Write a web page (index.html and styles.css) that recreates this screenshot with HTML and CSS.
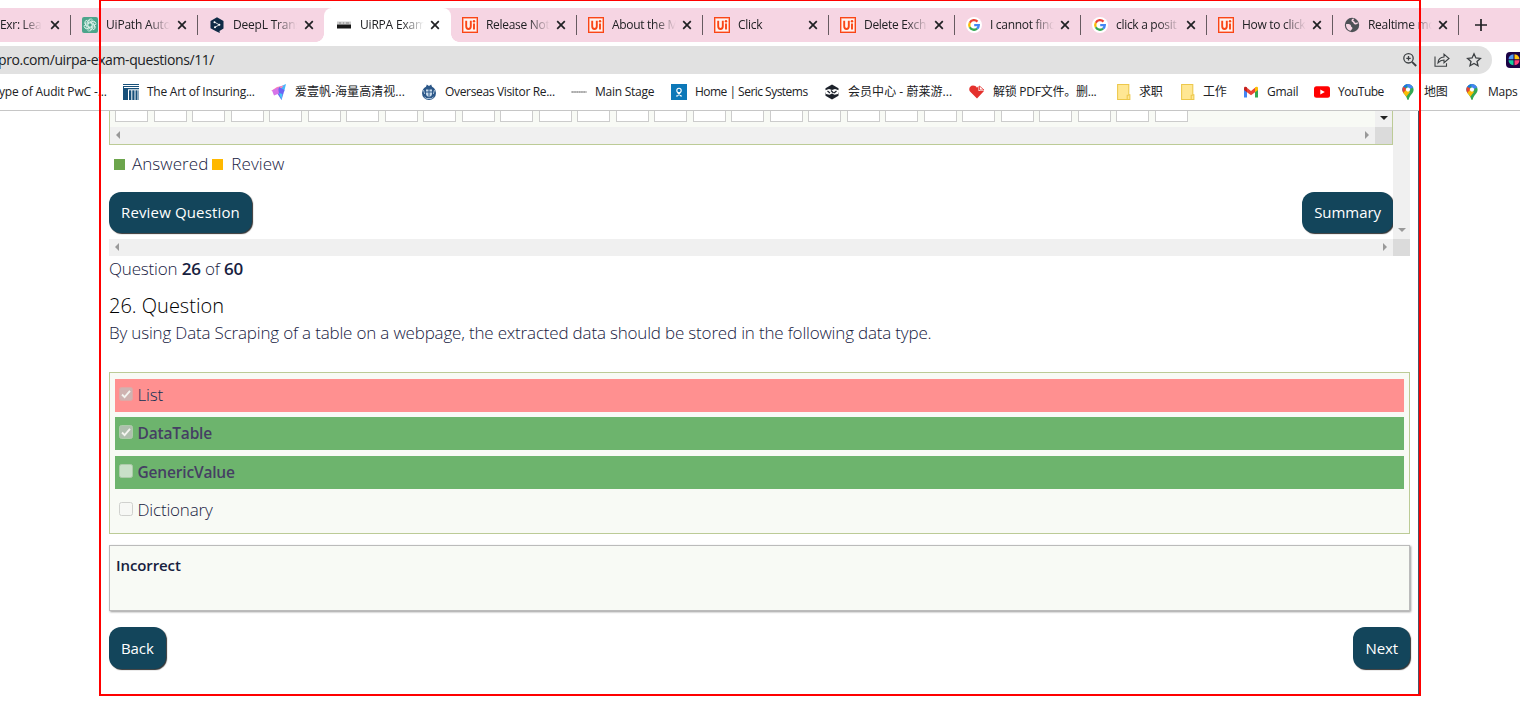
FILE: index.html
```html
<!DOCTYPE html>
<html lang="en">
<head>
<meta charset="utf-8">
<title>UiRPA Exam Questions</title>
<link rel="stylesheet" href="styles.css">
</head>
<body>
<svg class="defs" width="0" height="0">
  <symbol id="x" viewBox="0 0 10 10"><path d="M1.2 1.2 8.8 8.8M8.8 1.2 1.2 8.8" stroke="#202124" stroke-width="1.7" fill="none"/></symbol>
  <symbol id="ui" viewBox="0 0 16 16"><path fill="#fa4616" d="M0 0h16v16H0z"/><path d="M1.500 1.500h13v13h-13z" fill="#fff3ef" stroke="#ffb5a3" stroke-width=".6"/><path d="M4.200 3.800v5.500c0 3.600 4.600 3.600 4.600 0V3.800M12 6.500v6" fill="none" stroke="#fa4616" stroke-width="1.900"/><circle cx="12" cy="4.300" r="1.200" fill="#fa4616"/></symbol>
  <symbol id="g" viewBox="0 0 16 16"><circle cx="8" cy="8" r="8" fill="#fff"/><g fill="none" stroke-width="2.3"><path d="M11.5 4.6A4.8 4.8 0 0 0 3.8 5.7" stroke="#ea4335"/><path d="M3.8 5.7a4.9 4.9 0 0 0 0 4.6" stroke="#fbbc05"/><path d="M3.8 10.3a4.8 4.8 0 0 0 7.3 1.3" stroke="#34a853"/><path d="M11.1 11.6A4.8 4.8 0 0 0 12.8 8.1H8.2" stroke="#4285f4"/></g></symbol>
  <symbol id="pin" viewBox="0 0 12 16"><clipPath id="pc"><path d="M6 0a5.6 5.6 0 0 0-5.6 5.7C.4 9.6 4.2 10.800 5.200 15.200c.2 1 1.400 1 1.600 0C7.800 10.800 11.600 9.600 11.600 5.700A5.600 5.600 0 0 0 6 0z"/></clipPath><g clip-path="url(#pc)"><path fill="#34a853" d="M0 0h12v16H0z"/><path fill="#1a73e8" d="M0 0h7L0 7z"/><path fill="#4285f4" d="M5 0h7v3L6 6z"/><path fill="#ea4335" d="M0 2 5 5 1 10H0z"/><path fill="#fbbc04" d="M1 9 5 5 8 8 4 13z"/></g><circle cx="6" cy="5.600" r="2.100" fill="#fff"/></symbol>
  <symbol id="folder" viewBox="0 0 13 15"><path d="M.5.5h10.500v9.500h1v4.500H.5z" fill="#ffe793" stroke="#edc84b"/><path d="M9.500 14v-3.500h1.500" fill="none" stroke="#edc84b"/></symbol>
</svg>

<header class="browser">
  <nav class="tabs">
    <div class="tab tab-first"><span class="title">Exr: Lear</span><svg class="close"><use href="#x"/></svg></div>
    <div class="tab tab-wide">
      <svg class="fav" viewBox="0 0 16 16"><rect width="16" height="16" rx="2" fill="#4ba58b"/><g fill="none" stroke="#e4f7f0" stroke-width=".8"><path id="k" d="M6 9.200V4.600a2.600 2.600 0 0 1 4.800-1.400M6 5.800l3.500-2 3 1.700"/><use href="#k" transform="rotate(60 8 8)"/><use href="#k" transform="rotate(120 8 8)"/><use href="#k" transform="rotate(180 8 8)"/><use href="#k" transform="rotate(240 8 8)"/><use href="#k" transform="rotate(300 8 8)"/></g></svg>
      <span class="title">UiPath Auto</span><svg class="close"><use href="#x"/></svg></div>
    <div class="tab tab-plain">
      <svg class="fav" viewBox="0 0 16 16"><path d="M8 .2 14.500 4v7.500L10.500 14l.3 2L7 14.200 1.500 11.300V4z" fill="#0f2b46"/><path d="m5.300 5 5 2.800-4.500 2.500" fill="none" stroke="#fff" stroke-width=".8"/><g fill="#fff"><circle cx="5.500" cy="5.200" r="1"/><circle cx="10.400" cy="7.800" r="1"/><circle cx="6" cy="10.300" r="1"/></g></svg>
      <span class="title">DeepL Trans</span><svg class="close"><use href="#x"/></svg></div>
    <div class="tab tab-active">
      <svg class="fav" viewBox="0 0 16 16"><path d="M1 4.500h14v3H1z" fill="#ccc"/><path d="M1 7.500h14v4H1z" fill="#171717"/><path d="M3 6h2m2 0h1m2 0h3" stroke="#888"/></svg>
      <span class="title">UiRPA Exam</span><svg class="close"><use href="#x"/></svg></div>
    <div class="tab"><svg class="fav"><use href="#ui"/></svg><span class="title">Release Not</span><svg class="close"><use href="#x"/></svg></div>
    <div class="tab"><svg class="fav"><use href="#ui"/></svg><span class="title">About the M</span><svg class="close"><use href="#x"/></svg></div>
    <div class="tab"><svg class="fav"><use href="#ui"/></svg><span class="title">Click</span><svg class="close"><use href="#x"/></svg></div>
    <div class="tab"><svg class="fav"><use href="#ui"/></svg><span class="title">Delete Exch</span><svg class="close"><use href="#x"/></svg></div>
    <div class="tab"><svg class="fav"><use href="#g"/></svg><span class="title">I cannot find</span><svg class="close"><use href="#x"/></svg></div>
    <div class="tab"><svg class="fav"><use href="#g"/></svg><span class="title">click a posit</span><svg class="close"><use href="#x"/></svg></div>
    <div class="tab"><svg class="fav"><use href="#ui"/></svg><span class="title">How to click</span><svg class="close"><use href="#x"/></svg></div>
    <div class="tab">
      <svg class="fav" viewBox="0 0 16 16"><circle cx="8" cy="8" r="7.200" fill="#4d5156"/><path d="M2 7.200c2.500-.3 5 0 5 1.800 0 1.200 1.600.8 1.400 2.200-.2 1.200-1.200 1.300-1.600 2.600-2.800-.4-5-3-4.800-6.600z" fill="#f6d5e3"/><path d="M9.800 2.300c-2.200.3-1.800 1.800-.6 2.200s.5 1.900 2.100 2.100 1.300-.6 2.400-.5" fill="none" stroke="#f6d5e3" stroke-width="1.600"/></svg>
      <span class="title">Realtime mo</span><svg class="close"><use href="#x"/></svg></div>
    <svg class="plus" viewBox="0 0 12 12"><path d="M6 0v12M0 6h12" stroke="#202124" stroke-width="1.700"/></svg>
  </nav>

  <div class="toolbar">
    <div class="address">
      <span class="url">pro.com/uirpa-exam-questions/11/</span>
      <svg class="tool" viewBox="0 0 16 16"><g fill="none" stroke="#3c4043" stroke-width="1.300"><circle cx="6.500" cy="6.300" r="4.700"/><path d="M4.300 6.300h4.400M6.500 4.100v4.400"/><path d="m10 9.800 4.200 4.200" stroke-width="1.900"/></g></svg>
      <svg class="tool" viewBox="0 0 16 16"><path d="M1 4.500v9.800h11.500v-3M4 10.800c.3-3.800 2.500-5.700 6-5.800V2.200L15 6.500l-5 4.200V8c-2.500 0-4.300.8-6 2.800z" fill="none" stroke="#3c4043" stroke-width="1.100"/></svg>
      <svg class="tool" viewBox="0 0 16 16"><path d="m8 1.800 1.900 4.100 4.500.5-3.400 3 1 4.400L8 11.500l-4 2.300 1-4.400-3.400-3 4.500-.5z" fill="none" stroke="#3c4043" stroke-width="1.300"/></svg>
    </div>
    <svg class="extension" viewBox="0 0 16 16"><rect width="20" height="16" rx="4" fill="#1b0245"/><path d="M7.500 2.300v5h-5a5.500 5.500 0 0 1 5-5z" fill="#4f9bf5"/><path d="M8.500 2.300a5.500 5.500 0 0 1 5 5h-5z" fill="#ffc412"/><path d="M2.500 8.300h5v5a5.500 5.500 0 0 1-5-5z" fill="#12cf9c"/><path d="M8.500 8.300h5a5.500 5.500 0 0 1-5 5z" fill="#ff3f78"/></svg>
  </div>

  <nav class="bookmarks">
    <a class="mark mark-cut"><span>ype of Audit PwC -...</span></a>
    <a class="mark"><svg class="fav" viewBox="0 0 16 16"><path fill="#17507a" d="M0 0h16v16H0z"/><path d="M0 1.500h16M1 3.500h15M5 5.800h11M5.500 6v10M8.800 6v10M12 6v10M15 6v10" stroke="#fff" stroke-width="1"/></svg><span>The Art of Insuring...</span></a>
    <a class="mark mark-cjk"><svg class="fav" viewBox="0 0 16 16"><path d="M15 0 13 8 8 3z" fill="#45b8fb"/><path d="m13 1.500-5 5-8 .5 6-4z" fill="#ff83b5"/><path d="m8 3 5.500 3-3 10L6 9z" fill="#6d64f5"/><path d="m1 6.500 6-3 1 6-5 2z" fill="#d774e8"/><path d="m8 9 3.500 1-1 6z" fill="#48c8f5"/></svg><span>爱壹帆-海量高清视...</span></a>
    <a class="mark"><svg class="fav" viewBox="0 0 16 16"><circle cx="8" cy="9" r="7" fill="#2b5788"/><path d="M5 3 5.800.5 8 2l2.200-1.500L11 3z" fill="#2b5788"/><path d="M5 5.500h6v4.500c0 1.500-1.500 2.500-3 3.200-1.500-.7-3-1.700-3-3.200z" fill="#c9dbea"/><path d="M8 5v8M5 8h6" stroke="#2b5788"/><path d="m2.500 6 1.200 4M13.500 6l-1.200 4M3.500 13l2 1.500h5l2-1.500" fill="none" stroke="#c9dbea" stroke-width=".8"/></svg><span>Overseas Visitor Re...</span></a>
    <a class="mark"><svg class="fav" viewBox="0 0 16 16"><path d="M0 8h16" stroke="#bbb" stroke-width="1.500"/><path d="M1 8h14" stroke="#777" stroke-dasharray="1.500 .8" stroke-width=".8"/></svg><span>Main Stage</span></a>
    <a class="mark mark-seric"><svg class="fav" viewBox="0 0 16 16"><path fill="#0c78b8" d="M0 0h16v16H0z"/><path d="M5 12h1.500l3-3.500M11 12H9.800L6.500 8.500" fill="none" stroke="#fff" stroke-width="1.100"/><circle cx="8" cy="6.500" r="2.200" fill="none" stroke="#fff" stroke-width="1.100"/></svg><span>Home | Seric Systems</span></a>
    <a class="mark mark-cjk"><svg class="fav" viewBox="0 0 16 16"><path d="m8 .5 6.500 3.700v7.600L8 15.500l-6.500-3.700V4.200z" fill="#1d222b"/><path d="M.5 6.500 5 5l3 1 3-1 4.500 1.500L14 10l-3.500.8L8 9.500l-2.500 1.300L2 10z" fill="#fff"/><path d="m3.500 7 2.500 2M12.500 7 10 9M7 6.500l2.500 2.500" stroke="#1d222b" stroke-width="1.300"/></svg><span>会员中心 - 蔚莱游...</span></a>
    <a class="mark"><svg class="fav" viewBox="0 0 16 16"><path d="M8 14.500 1 7.500C-.8 5 .8 1.500 4 1.500c2 0 3 .8 4 2.200L9.500 2v5H15z" fill="#e4312d"/><path d="m10.500 2 4.500 4h-4.500z" fill="#fff" stroke="#e4312d" stroke-width=".8"/></svg><span>解锁 PDF文件。删...</span></a>
    <a class="mark mark-folder"><svg class="fav"><use href="#folder"/></svg><span>求职</span></a>
    <a class="mark mark-folder"><svg class="fav"><use href="#folder"/></svg><span>工作</span></a>
    <a class="mark"><svg class="fav" viewBox="0 0 16 16"><path d="M1 4v9.500h3V7z" fill="#4285f4"/><path d="M12 7v6.500h3V4z" fill="#34a853"/><path d="M4 3.800 8 7l4-3.200v4.500l-4 3-4-3z" fill="#ea4335"/><path d="M1 6V4.200C1 2.600 2.800 2.400 4 3.300v5z" fill="#c5221f"/><path d="M15 6V4.200c0-1.600-1.800-1.800-3-.9v5z" fill="#fbbc04"/></svg><span>Gmail</span></a>
    <a class="mark mark-tube"><svg class="fav" viewBox="0 0 16 16"><rect y="2.300" width="16" height="11.500" rx="2.500" fill="#f00"/><path d="m6.300 5.600 4.500 2.500-4.500 2.500z" fill="#fff"/></svg><span>YouTube</span></a>
    <a class="mark"><svg class="fav"><use href="#pin"/></svg><span>地图</span></a>
    <a class="mark"><svg class="fav"><use href="#pin"/></svg><span>Maps</span></a>
  </nav>
</header>

<main class="page">
  <section class="panel">
    <div class="panel-body">
      <div class="numbers">
        <div class="cells">
          <i></i><i></i><i></i><i></i><i></i><i></i><i></i><i></i><i></i><i></i><i></i><i></i><i></i><i></i>
          <i></i><i></i><i></i><i></i><i></i><i></i><i></i><i></i><i></i><i></i><i></i><i></i><i></i><i></i>
        </div>
        <div class="vbar vbar-small"><b class="arrow down dark"></b></div>
        <div class="hbar"><b class="arrow left"></b><b class="arrow right"></b></div>
        <div class="corner"></div>
      </div>
      <div class="legend"><i class="key green"></i><span>Answered</span><i class="key amber"></i><span>Review</span></div>
      <div class="actions"><button class="btn btn-review">Review Question</button><button class="btn btn-summary">Summary</button></div>
    </div>
    <div class="vbar"><b class="arrow down"></b></div>
    <div class="hbar"><b class="arrow left"></b><b class="arrow right"></b></div>
    <div class="corner"></div>
  </section>

  <p class="progress">Question <strong>26</strong> of <strong>60</strong></p>
  <h1 class="heading">26. Question</h1>
  <p class="prompt">By using Data Scraping of a table on a webpage, the extracted data should be stored in the following data type.</p>

  <ul class="answers">
    <li class="answer wrong"><svg class="box checked" viewBox="0 0 14 14"><rect x=".5" y=".5" width="13" height="13" rx="2"/><path d="m3 7.500 2.600 2.600L11 3.800"/></svg><span>List</span></li>
    <li class="answer right-answer"><svg class="box checked" viewBox="0 0 14 14"><rect x=".5" y=".5" width="13" height="13" rx="2"/><path d="m3 7.500 2.600 2.600L11 3.800"/></svg><span>DataTable</span></li>
    <li class="answer right-answer"><svg class="box" viewBox="0 0 14 14"><rect x=".5" y=".5" width="13" height="13" rx="2"/></svg><span>GenericValue</span></li>
    <li class="answer"><svg class="box plain" viewBox="0 0 14 14"><rect x=".5" y=".5" width="13" height="13" rx="2"/></svg><span>Dictionary</span></li>
  </ul>

  <div class="feedback">Incorrect</div>
  <div class="actions footer"><button class="btn">Back</button><button class="btn">Next</button></div>
</main>
<div class="edge"></div>
<div class="frame"></div>
</body>
</html>
```
FILE: styles.css
```css
* { box-sizing: border-box; }
body { margin: 0; width: 1520px; height: 720px; overflow: hidden; background: #fff; position: relative; font-family: "Open Sans", "Noto Sans CJK SC", sans-serif; }
.defs { position: absolute; }
p, h1, ul { margin: 0; padding: 0; }

/* Browser chrome */
.browser { height: 111px; padding-top: 8px; border-bottom: 1px solid #c6c6c6; font-size: 12px; color: #202124; overflow: hidden; }
.tabs { display: flex; height: 34px; background: #f6d5e3; }
.tab { flex: none; display: flex; align-items: center; width: 126px; height: 34px; padding-left: 11px; position: relative; }
.tab::after { content: ""; position: absolute; right: 0; top: 7px; width: 1px; height: 20px; background: #665a60; }
.tab-first { width: 71px; padding-left: 0; }
.tab-first .title { width: 50px; margin-left: 0; -webkit-mask-image: linear-gradient(90deg, #000 22px, transparent 42px); mask-image: linear-gradient(90deg, #000 22px, transparent 42px); }
.tab-wide { width: 127px; }
.tab-wide .title, .tab-active .title, .tab-plain .title { letter-spacing: -.2px; }
.tab-plain::after { display: none; }
.tab-active { width: 127px; height: 38px; padding: 0 0 4px 12px; background: #fff; border-radius: 8px 8px 0 0; z-index: 1; }
.tab-active::before, .tab-active::after { content: ""; position: absolute; top: 26px; width: 8px; height: 8px; }
.tab-active::before { left: -8px; background: radial-gradient(circle at 0 0, transparent 7.500px, #fff 8px); }
.tab-active::after { left: 127px; right: auto; background: radial-gradient(circle at 100% 0, transparent 7.500px, #fff 8px); }
.fav { flex: none; width: 16px; height: 16px; }
.title { flex: none; width: 70px; margin-left: 8px; overflow: hidden; white-space: nowrap; line-height: 18px; letter-spacing: -.3px; -webkit-mask-image: linear-gradient(90deg, #000 42px, transparent 64px); mask-image: linear-gradient(90deg, #000 42px, transparent 64px); }
.close { flex: none; width: 10px; height: 10px; }
.tab-wide .close, .tab-plain .close { margin-left: 1px; }
.plus { width: 12px; height: 12px; margin: 11px 0 0 16px; }

.toolbar { display: flex; align-items: center; height: 28px; margin-top: 4px; }
.address { flex: none; display: flex; align-items: center; width: 1492px; height: 28px; padding-right: 10px; gap: 16px; background: #e1e1e1; border-radius: 0 14px 14px 0; }
.url { flex: 1; margin-left: -2px; font-size: 14px; line-height: 20px; letter-spacing: -.4px; white-space: nowrap; }
.tool { width: 16px; height: 16px; }
.extension { width: 16px; height: 16px; margin-left: 14px; flex: none; }

.bookmarks { display: grid; grid-template-columns: 123px 148px 150px 150px 100px 153px 145px 147px 64px 63px 71px 86px 64px 56px; height: 36px; align-items: center; }
.mark { display: flex; align-items: center; gap: 8px; white-space: nowrap; letter-spacing: -.25px; line-height: 18px; }
.mark:nth-child(4) { letter-spacing: -.33px; }
.mark-seric { letter-spacing: -.52px; }
.mark-cjk { letter-spacing: .05px; }
.mark-folder { gap: 7px; }
.mark-tube { letter-spacing: -.5px; }
.mark-cut { letter-spacing: -.15px; margin-left: -1px; }

/* Quiz */
.page { width: 1301px; margin-left: 109px; color: #17213f; font-size: 17px; font-weight: 300; letter-spacing: -.18px; }
.panel { display: grid; grid-template-columns: 1284px 17px; grid-template-rows: 128px 17px; }
.panel-body { overflow: hidden; }
.numbers { display: grid; grid-template-columns: 1265px 17px; grid-template-rows: 16px 17px; height: 34px; border: 1px solid #bccb96; border-top: 0; background: #f8faf5; }
.cells { display: flex; gap: 5.500px; padding-left: 5px; overflow: hidden; }
.cells i { flex: none; width: 33px; height: 11px; background: #fff; border: 1px solid #ccc; border-top: 0; }
.vbar { background: #f0f0f0; display: flex; justify-content: center; align-items: flex-end; padding-bottom: 7px; }
.vbar-small { padding-bottom: 7px; }
.hbar { background: #f0f0f0; display: flex; justify-content: space-between; align-items: center; padding: 0 6px 1px; }
.corner { background: #dbdbdb; }
.arrow { width: 0; height: 0; border: 4px solid transparent; }
.left { border-right-color: #999; border-left: 0; }
.right { border-left-color: #999; border-right: 0; }
.down { border-top-color: #999; border-bottom: 0; }
.dark { border-top-color: #222; }
.legend { display: flex; align-items: center; height: 38px; padding-left: 5px; letter-spacing: .06px; }
.legend span { padding-bottom: 2px; }
.key { width: 11px; height: 11px; margin-right: 7px; }
.green { background: #6ca54c; }
.amber { background: #ffb800; margin-left: 4px; margin-right: 8px; }
.actions { display: flex; justify-content: space-between; margin-top: 9px; }
.btn { height: 41px; padding: 0 12px 1px; border: 0; border-radius: 12px; background: #13455b; color: #fff; font: 400 15px/20px "Open Sans", sans-serif; letter-spacing: -.1px; box-shadow: 1px 1px 1px #333; }
.btn-review { letter-spacing: .15px; }
.btn-summary { letter-spacing: -.05px; }
.progress { line-height: 26px; }
.progress strong { font-weight: 600; }
.heading { margin-top: 9px; padding-top: 1px; line-height: 27px; font-size: 20px; font-weight: 300; letter-spacing: 0; color: #000; }
.prompt { line-height: 28px; white-space: nowrap; }
.answers { height: 162px; margin-top: 25px; padding: 6px 5px; border: 1px solid #bccb96; background: #f8faf5; list-style: none; display: flex; flex-direction: column; gap: 5.400px; }
.answer { display: flex; height: 33px; padding: 0 4px; line-height: 31px; }
.answer span { margin-left: 5px; }
.wrong { background: #ff9090; color: #0d3153; }
.right-answer { background: #6db46d; color: #453f63; font-size: 15.500px; font-weight: 600; }
.right-answer span { padding-top: 1px; }
.box { width: 14px; height: 14px; margin: 8px 0 0 -.5px; fill: #c9e0c8; stroke: #adcbaa; }
.checked { fill: #afbfae; }
.wrong .box { fill: #cfb3b1; stroke: #dfa8a5; }
.box path { fill: none; stroke: #f4f4f0; stroke-width: 1.900; }
.plain { fill: #f7f8f5; stroke: #d0d1ce; }
.feedback { height: 66px; margin-top: 11px; padding: 7px 6px; border: 1px solid #bbb; background: #f8faf5; box-shadow: 1px 1px 2px #999; font-size: 15px; font-weight: 600; line-height: 24px; letter-spacing: -.1px; }
.footer { margin-top: 16px; }
.footer .btn { height: 42px; }

/* Overlays */
.edge { position: absolute; left: 1418px; top: 111px; width: 1px; height: 583px; background: #4c5568; }
.frame { position: absolute; left: 99px; top: -1px; width: 1322px; height: 697px; border: 2px solid #f00; }
```
